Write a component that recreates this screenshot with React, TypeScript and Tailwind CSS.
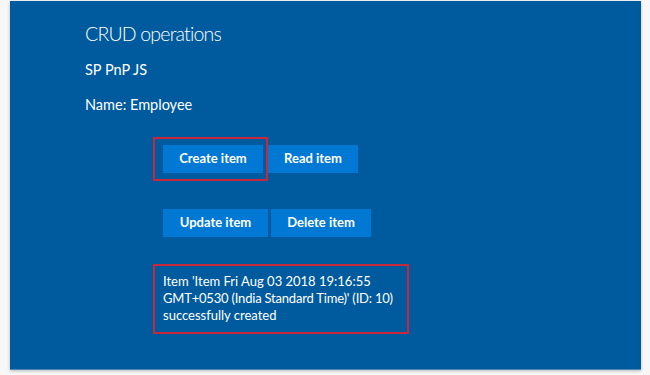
import React from 'react'

// Blue CRUD web part card with annotated (red) regions
function ActionButton({ label, width }: { label: string; width: string }) {
  return (
    <button
      className={`h-[28px] ${width} bg-[#0078d4] text-white text-[13px] font-bold flex items-center justify-center whitespace-nowrap`}
    >
      {label}
    </button>
  )
}

export default function App() {
  return (
    <div
      className="w-[650px] h-[375px] bg-[#f7f7f7] pt-[1px] pl-[10px] overflow-hidden"
      style={{ fontFamily: 'Lato, "Noto Sans", sans-serif' }}
    >
      <div className="w-[631px] h-[369px] bg-[#005a9e] text-white pl-[75px] pt-[19px] shadow-[0_1px_3px_rgba(0,0,0,0.25)] border-b border-[#4f87b8]">
        <h1 className="text-[19.5px] leading-[28px] font-light tracking-[-0.8px]">CRUD operations</h1>
        <p className="mt-[12px] text-[14.5px] leading-[20px]">SP PnP JS</p>
        <p className="mt-[15px] text-[14.5px] leading-[20px]">Name: Employee</p>

        <div className="ml-[78px] mt-[30px] flex gap-[5px]">
          <div className="relative">
            <ActionButton label="Create item" width="w-[100px]" />
            <div className="absolute -left-[10px] -top-[8px] -right-[5px] -bottom-[8px] border-2 border-[#c8283a] pointer-events-none" />
          </div>
          <ActionButton label="Read item" width="w-[90px]" />
        </div>

        <div className="ml-[78px] mt-[36px] flex gap-[3px]">
          <ActionButton label="Update item" width="w-[105px]" />
          <ActionButton label="Delete item" width="w-[100px]" />
        </div>

        <div className="ml-[78px] mt-[36px] relative w-[236px] text-[13px] leading-[17px] whitespace-nowrap">
          <p>Item 'Item Fri Aug 03 2018 19:16:55</p>
          <p className="tracking-[-0.2px]">GMT+0530 (India Standard Time)' (ID: 10)</p>
          <p>successfully created</p>
          <div className="absolute -left-[10px] -top-[9px] -right-[10px] -bottom-[10px] border-2 border-[#c8283a] pointer-events-none" />
        </div>
      </div>
    </div>
  )
}
